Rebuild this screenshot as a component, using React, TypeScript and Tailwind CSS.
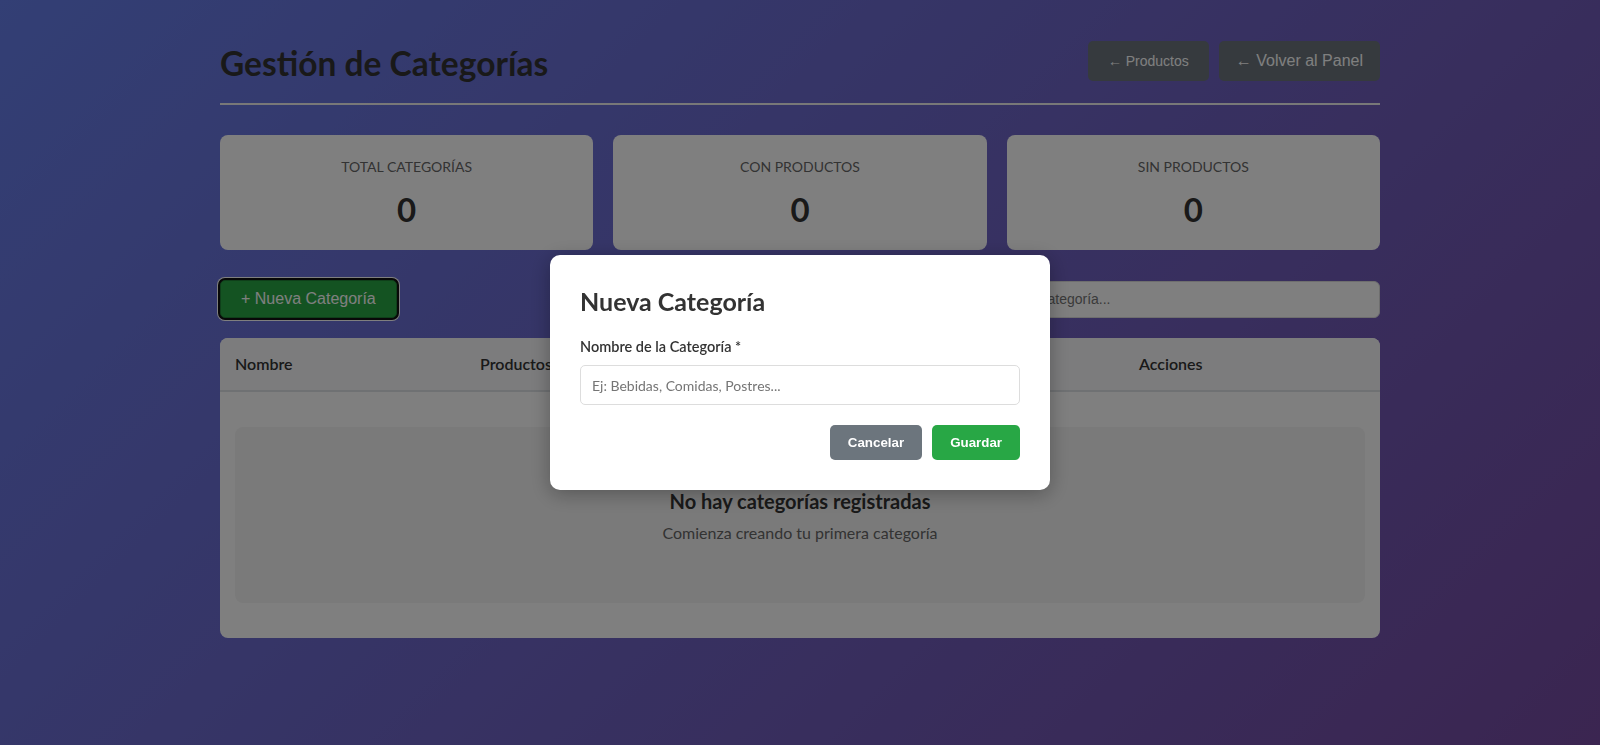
import React from 'react';

const stats = [
  { label: 'Total Categorías', value: 0 },
  { label: 'Con Productos', value: 0 },
  { label: 'Sin Productos', value: 0 },
];

const columns = ['Nombre', 'Productos', 'Fecha de Creación', 'Acciones'];

const StatCard: React.FC<{ label: string; value: number }> = ({ label, value }) => (
  <div className="bg-white rounded-lg h-[115px] pt-[22px] text-center">
    <p className="text-sm leading-5 uppercase text-[#666]">{label}</p>
    <p className="mt-[13px] text-[33px] leading-[38px] font-bold text-[#333]">{value}</p>
  </div>
);

export default function App() {
  return (
    <div className="min-h-screen bg-[linear-gradient(135deg,#667eea_0%,#764ba2_100%)] font-['Segoe_UI',Lato,sans-serif]">
      <div className="max-w-[1200px] mx-auto px-5 pt-[41px] pb-10">
        {/* Header */}
        <div className="flex items-center justify-between pb-[22px] mb-[30px] border-b-2 border-[#f0f0f0]">
          <h1 className="text-[33.5px] leading-10 font-bold text-[#333] translate-y-[2px]">Gestión de Categorías</h1>
          <div className="flex gap-[10px]">
            <button className="h-10 px-5 rounded-[5px] bg-[#6c757d] text-white text-[14px] font-['Liberation_Sans',Arial,sans-serif]">
              ← Productos
            </button>
            <button className="h-10 px-[17px] rounded-[5px] bg-[#6c757d] text-white text-base font-['Liberation_Sans',Arial,sans-serif]">
              ← Volver al Panel
            </button>
          </div>
        </div>

        {/* Stats */}
        <div className="grid grid-cols-3 gap-5 mb-[30px]">
          {stats.map((s) => (
            <StatCard key={s.label} label={s.label} value={s.value} />
          ))}
        </div>

        {/* Toolbar */}
        <div className="flex items-center justify-between mb-5">
          <button className="px-5 py-[9px] rounded-[5px] bg-[#28a745] text-white text-base leading-[18px] border border-[#1e7e34] font-['Liberation_Sans',Arial,sans-serif] shadow-[0_0_0_2px_#101010,0_0_0_3px_#ffffff]">
            + Nueva Categoría
          </button>
          <input
            type="text"
            placeholder="Buscar categoría..."
            className="w-[400px] h-[37px] px-3 rounded-[6px] bg-white border border-[#ddd] text-sm font-['Liberation_Sans',Arial,sans-serif] placeholder:text-[#757575]"
          />
        </div>

        {/* Table */}
        <div className="bg-white rounded-lg overflow-hidden">
          <div className="grid grid-cols-[245px_1fr_1fr_256px] bg-[#f8f9fa] border-b-2 border-[#dee2e6]">
            {columns.map((c) => (
              <div key={c} className="px-[15px] py-[14px] leading-6 font-semibold text-[#333]">
                {c}
              </div>
            ))}
          </div>
          <div className="px-[15px] pt-[35px] pb-[35px]">
            <div className="rounded-lg bg-[#f5f5f5] h-[176px] flex flex-col items-center justify-end pb-[58px]">
              <h3 className="text-xl leading-7 font-bold text-[#333]">No hay categorías registradas</h3>
              <p className="mt-[6px] text-base leading-6 text-[#666]">Comienza creando tu primera categoría</p>
            </div>
          </div>
        </div>
      </div>

      {/* Modal */}
      <div className="fixed inset-0 bg-black/50 flex items-center justify-center">
        <div className="w-[500px] bg-white rounded-[10px] p-[30px] shadow-[0_4px_20px_rgba(0,0,0,0.3)]">
          <h2 className="text-[25px] leading-8 font-bold text-[#333] mb-5">Nueva Categoría</h2>
          <label className="block text-[14.5px] leading-5 font-semibold text-[#333] mb-2">Nombre de la Categoría *</label>
          <input
            type="text"
            placeholder="Ej: Bebidas, Comidas, Postres..."
            className="w-full h-10 px-[11px] rounded-[5px] border border-[#ddd] text-sm placeholder:text-[#757575]"
          />
          <div className="flex justify-end gap-[10px] mt-5">
            <button className="h-[35px] px-[18px] rounded-[5px] bg-[#6c757d] text-white text-[13.33px] font-bold font-['Liberation_Sans',Arial,sans-serif]">
              Cancelar
            </button>
            <button className="h-[35px] px-[18px] rounded-[5px] bg-[#28a745] text-white text-[13.33px] font-bold font-['Liberation_Sans',Arial,sans-serif]">
              Guardar
            </button>
          </div>
        </div>
      </div>
    </div>
  );
}
